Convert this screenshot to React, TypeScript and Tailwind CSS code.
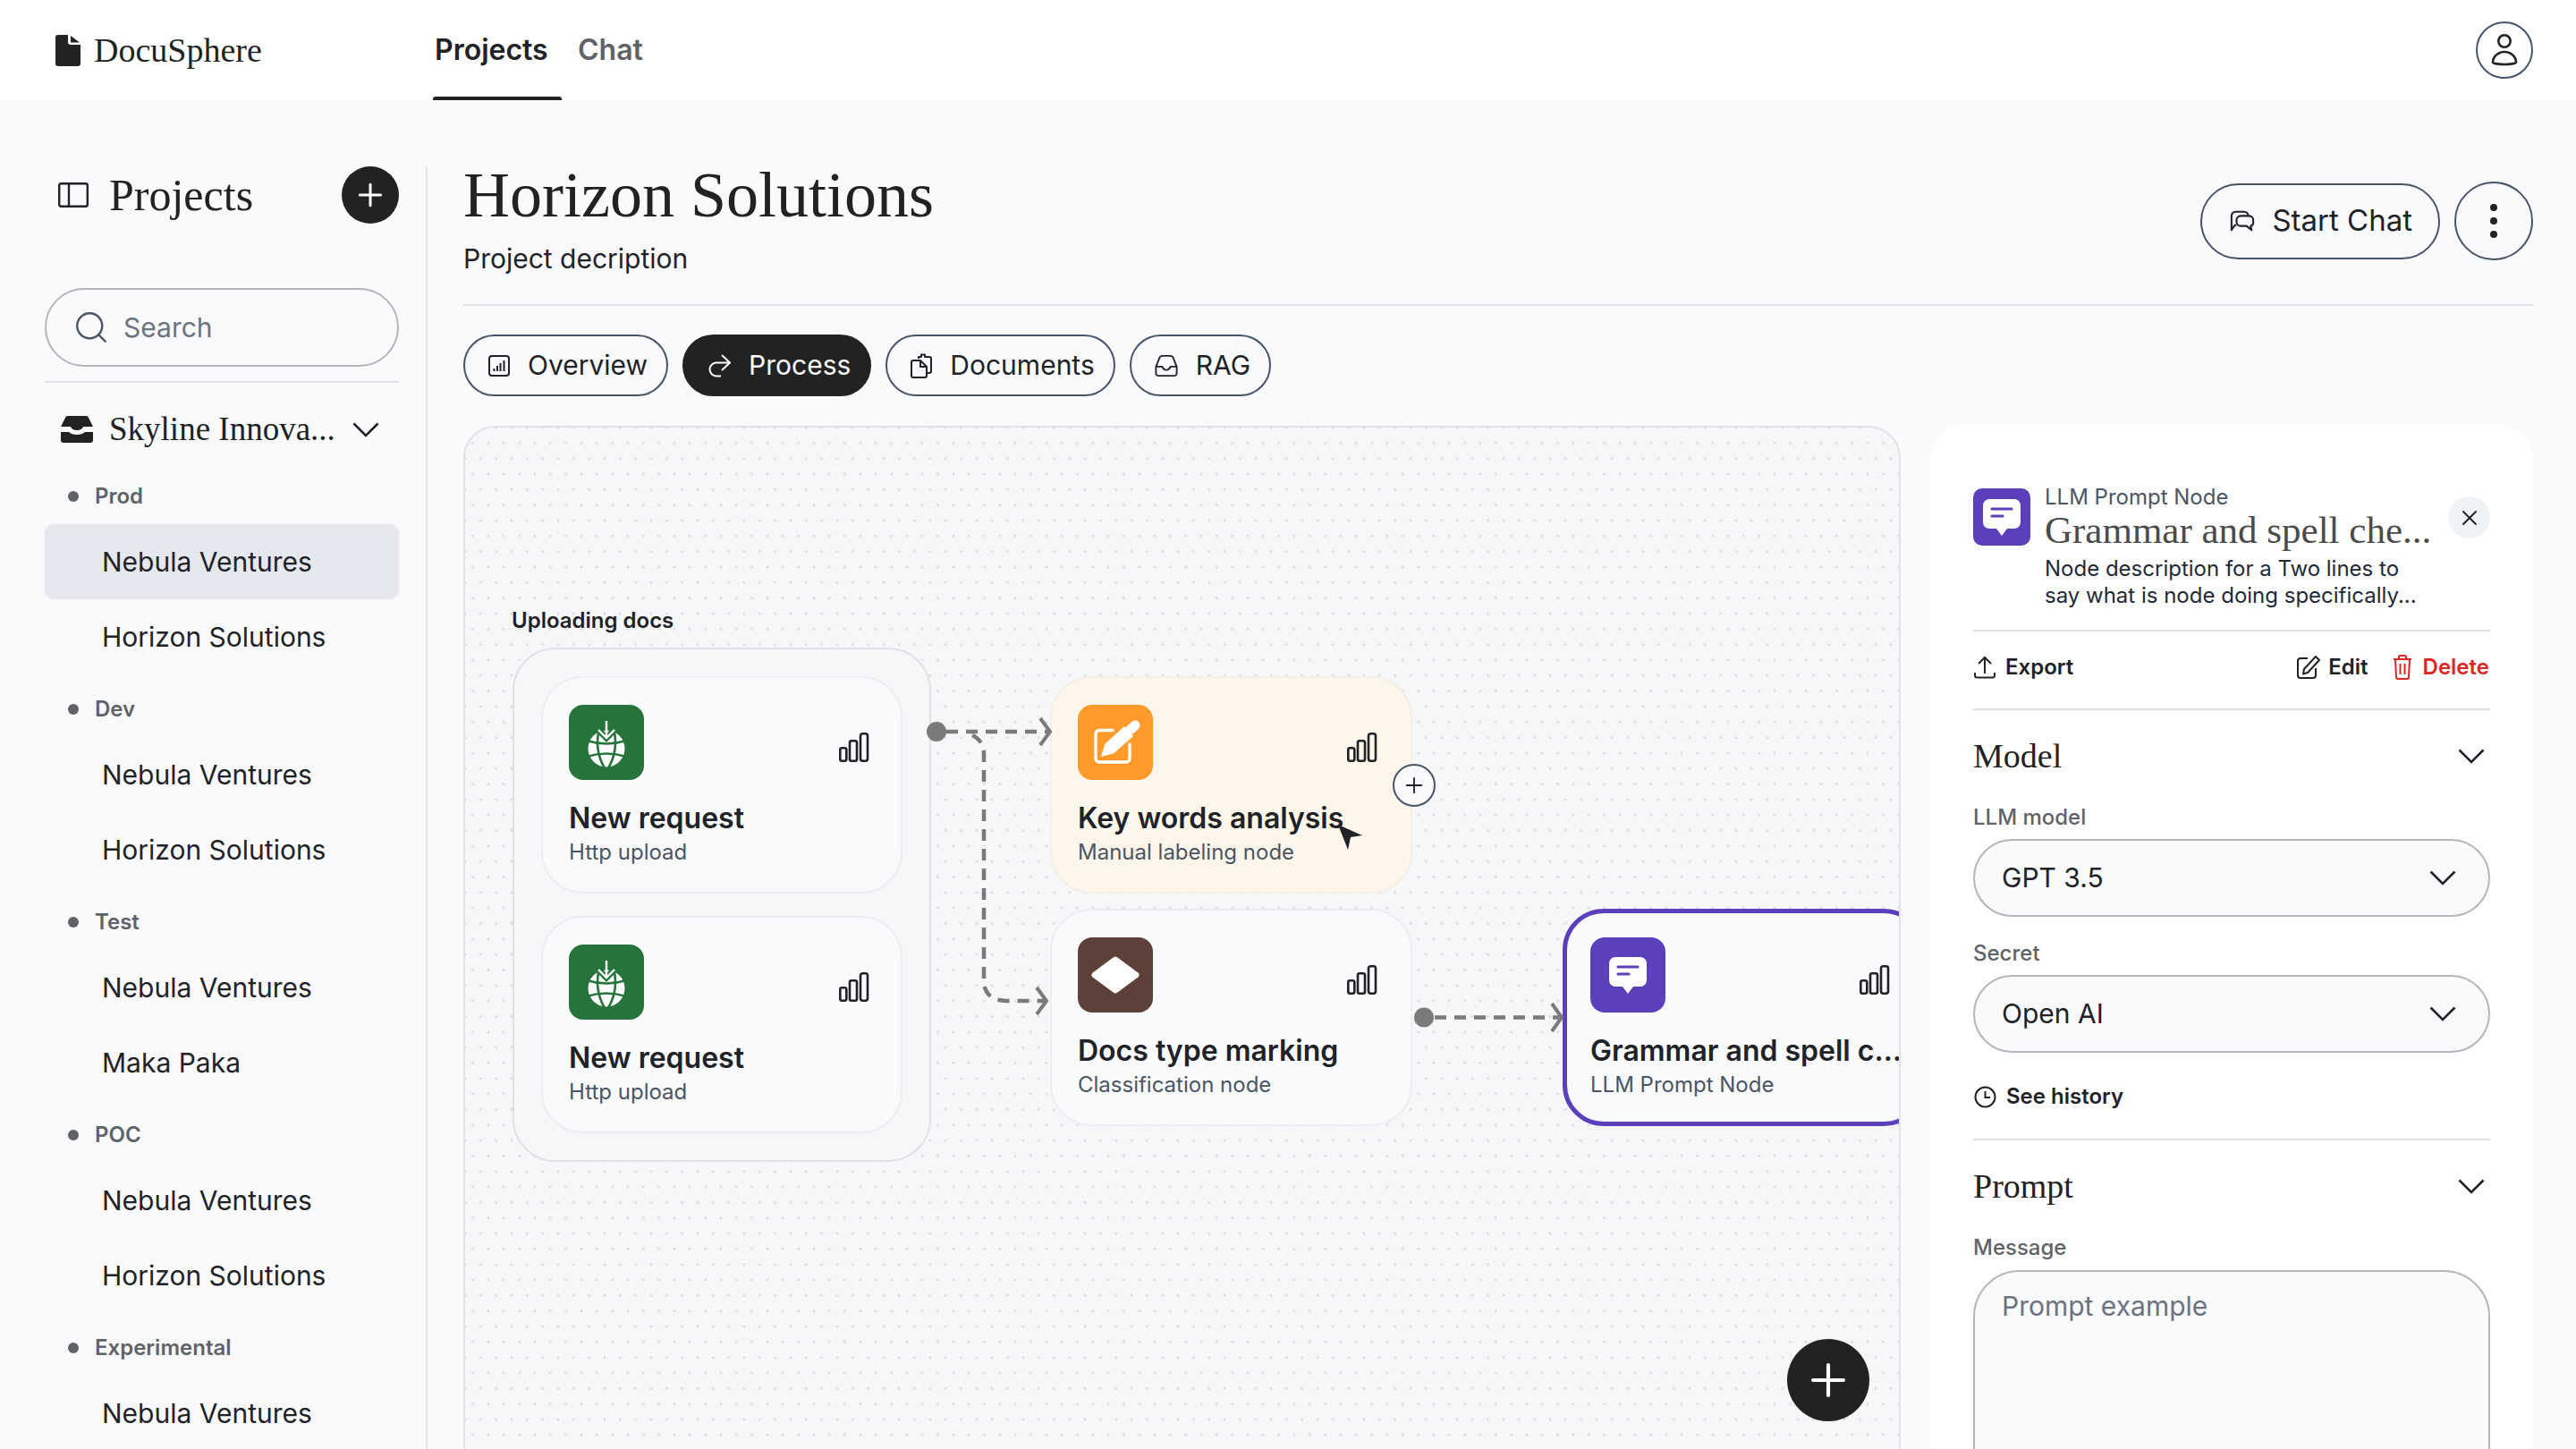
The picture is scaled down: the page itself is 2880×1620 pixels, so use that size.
import { Plus, Search, X } from 'lucide-react';

const SERIF = "[font-family:'Liberation_Serif',serif]";

const GROUPS = [
    { name: 'Prod', items: ['Nebula Ventures', 'Horizon Solutions'] },
    { name: 'Dev', items: ['Nebula Ventures', 'Horizon Solutions'] },
    { name: 'Test', items: ['Nebula Ventures', 'Maka Paka'] },
    { name: 'POC', items: ['Nebula Ventures', 'Horizon Solutions'] },
    { name: 'Experimental', items: ['Nebula Ventures'] },
];

function Chevron({ className }: { className?: string }) {
    return (
        <svg width="30" height="17" viewBox="0 0 30 17" fill="none" stroke="#1f2226" strokeWidth="2.6" className={className}>
            <path d="M1.500 1.500L15 15L28.500 1.500" />
        </svg>
    );
}

function Bars() {
    return (
        <svg width="34" height="33" viewBox="0 0 34 33" fill="none" stroke="#1f2226" strokeWidth="2.6">
            <rect x="1.3" y="17.3" width="7" height="14.4" rx="2" />
            <rect x="12" y="9.3" width="8" height="22.4" rx="2" />
            <rect x="24" y="1.3" width="8" height="30.4" rx="2.4" />
        </svg>
    );
}

function GlobeIcon() {
    return (
        <svg viewBox="0 0 84 84" className="w-full h-full" fill="none">
            <circle cx="42" cy="49" r="20.5" fill="#fff" />
            <g stroke="#26733c" strokeWidth="2.6">
                <path d="M34 27Q28 50 40 71" />
                <path d="M50 27Q56 50 44 71" />
                <path d="M20 40Q42 47 64 40" />
                <path d="M20 58Q42 51 64 58" />
            </g>
            <path d="M31 26L42 37L53 26" stroke="#26733c" strokeWidth="7" />
            <path d="M42 18V37M33 28L42 37L51 28" stroke="#fff" strokeWidth="2.4" />
        </svg>
    );
}

function PencilIcon() {
    return (
        <svg viewBox="0 0 84 84" className="w-full h-full" fill="none">
            <path d="M39 28.5H24a4 4 0 0 0-4 4V60a4 4 0 0 0 4 4H54a4 4 0 0 0 4-4V44" stroke="#fff" strokeWidth="3.4" strokeLinecap="round" />
            <path d="M27 57L31 44L52 25L61 35L40 53.5Z" fill="#fff" stroke="#fff" strokeWidth="1.5" strokeLinejoin="round" />
            <path d="M59 27.5L64 23" stroke="#fff" strokeWidth="11" strokeLinecap="round" />
        </svg>
    );
}

function DiamondIcon() {
    return (
        <svg viewBox="0 0 84 84" className="w-full h-full">
            <path d="M19 42L42 25L65 42L42 59Z" fill="#fff" stroke="#fff" strokeWidth="7" strokeLinejoin="round" />
        </svg>
    );
}

function BubbleIcon({ viewBox = '0 0 84 84' }: { viewBox?: string }) {
    return (
        <svg viewBox={viewBox} className="w-full h-full" fill="none">
            <path d="M28 22H56a7 7 0 0 1 7 7V48a7 7 0 0 1-7 7H48L42 63L36 55H28a7 7 0 0 1-7-7V29a7 7 0 0 1 7-7Z" fill="#fff" />
            <path d="M31 33H53M31 41H43" stroke="#5b3fbb" strokeWidth="3.2" strokeLinecap="round" />
        </svg>
    );
}

function Node({ icon, iconBg, title, sub, className }: { icon: React.ReactNode; iconBg: string; title: string; sub: string; className: string }) {
    return (
        <div className={`h-[243px] rounded-[46px] ${className}`}>
            <div className="flex justify-between items-start">
                <div className={`w-[84px] h-[84px] rounded-[16px] ${iconBg}`}>{icon}</div>
                <div className="mt-[31px]"><Bars /></div>
            </div>
            <div className="mt-[23px] text-[32px] leading-[40px] font-semibold text-[#1f2226] whitespace-nowrap">{title}</div>
            <div className="mt-[2px] text-[24px] leading-[32px] text-[#4b5563] whitespace-nowrap">{sub}</div>
        </div>
    );
}

function Select({ value }: { value: string }) {
    return (
        <div className="mt-[8px] h-[87px] rounded-full border-2 border-[#b4b6b9] bg-[#f9fafc] pl-[30px] pr-[36px] flex items-center justify-between text-[30px] text-[#1f2226]">
            {value}
            <Chevron />
        </div>
    );
}

function TabButton({ icon, label, active }: { icon: React.ReactNode; label: string; active?: boolean }) {
    const style = active ? 'bg-[#222222] text-white border-[#222222]' : 'border-[#475569] text-[#1f2226]';
    return (
        <div className={`h-[69px] rounded-full border-2 pl-[26px] pr-[21px] flex items-center gap-[20px] text-[30px] ${style}`}>
            {icon}
            {label}
        </div>
    );
}

export default function App() {
    return (
        <div className="w-[2880px] h-[1620px] overflow-hidden flex flex-col bg-[#f9fafc] font-['Inter',sans-serif] text-[#1f2226]">
            <header className="h-[112px] shrink-0 bg-white flex items-center pl-[62px] pr-[48px]">
                <div className="w-[422px] flex items-center gap-[15px]">
                    <svg width="28" height="35" viewBox="0 0 28 35" fill="#222222">
                        <path d="M3 0h11v8a3 3 0 0 0 3 3h11v21a3 3 0 0 1-3 3H3a3 3 0 0 1-3-3V3a3 3 0 0 1 3-3z" />
                        <path d="M17 1L27 8.5H18a1 1 0 0 1-1-1z" />
                    </svg>
                    <span className={`${SERIF} text-[38px] text-[#222222]`}>DocuSphere</span>
                </div>
                <nav className="flex h-full gap-[18px] text-[32px] font-semibold">
                    <div className="relative w-[144px] flex items-center pl-[2px]">
                        Projects
                        <div className="absolute bottom-0 left-0 right-0 h-[4px] rounded-t-[3px] bg-[#222222]" />
                    </div>
                    <div className="flex items-center text-[#5f6368]">Chat</div>
                </nav>
                <div className="ml-auto w-[64px] h-[64px] rounded-full border-2 border-[#475569] flex items-center justify-center">
                    <svg width="30" height="36" viewBox="0 0 30 36" fill="none" stroke="#1f2226" strokeWidth="2.6">
                        <circle cx="15" cy="8" r="6.7" />
                        <path d="M2 32C2 25 8 20 15 20C22 20 28 25 28 32C28 33 20 34 15 34C10 34 2 33 2 32Z" />
                    </svg>
                </div>
            </header>

            <div className="flex-1 flex min-h-0">
                <aside className="w-[478px] shrink-0 mt-[74px] pl-[50px] pr-[30px] border-r-2 border-[#e2e4e8]">
                    <div className="h-[64px] flex items-center">
                        <svg width="34" height="28" viewBox="0 0 34 28" fill="none" stroke="#1f2226" strokeWidth="2.4" className="ml-[15px]">
                            <rect x="1.2" y="1.2" width="31.6" height="25.6" rx="2" />
                            <path d="M12 1.2V26.8" />
                        </svg>
                        <span className={`${SERIF} ml-[23px] text-[50px] text-[#222222]`}>Projects</span>
                        <div className="ml-auto w-[64px] h-[64px] rounded-full bg-[#222222] flex items-center justify-center text-white">
                            <Plus size={40} strokeWidth={1.8} />
                        </div>
                    </div>
                    <div className="mt-[72px] h-[88px] rounded-full border-2 border-[#b4b6b9] pl-[29px] flex items-center gap-[15px] text-[30px] text-[#6b7280]">
                        <Search size={42} strokeWidth={1.4} className="text-[#4b5563]" />
                        Search
                    </div>
                    <div className="mt-[16px] h-[2px] bg-[#dfe1e5]" />
                    <div className="mt-[20px] h-[64px] flex items-center">
                        <svg width="36" height="30" viewBox="0 0 36 30" fill="#222222" className="ml-[18px]">
                            <path d="M8 0H28a3 3 0 0 1 3 2L36 12H25Q23.500 16 18 16Q12.500 16 11 12H0L5 2a3 3 0 0 1 3-2Z" />
                            <path d="M0 18H9Q12 21 18 21Q24 21 27 18H36V27a3 3 0 0 1-3 3H3a3 3 0 0 1-3-3Z" />
                        </svg>
                        <span className={`${SERIF} ml-[18px] text-[37px] whitespace-nowrap text-[#222222]`}>Skyline Innova...</span>
                        <Chevron className="ml-auto mr-[22px]" />
                    </div>
                    <div className="mt-[12px]">
                        {GROUPS.map((group) => (
                            <div key={group.name} className="mb-[8px]">
                                <div className="h-[62px] flex items-center pl-[26px] gap-[18px] text-[24px] font-semibold text-[#5f6368]">
                                    <div className="w-[12px] h-[12px] rounded-full bg-[#5f6368]" />
                                    {group.name}
                                </div>
                                {group.items.map((item, i) => (
                                    <div
                                        key={item}
                                        className={`h-[84px] flex items-center pl-[64px] text-[30px] rounded-[10px] ${group.name === 'Prod' && i === 0 ? 'bg-[#e5e8ef]' : ''}`}
                                    >
                                        {item}
                                    </div>
                                ))}
                            </div>
                        ))}
                    </div>
                </aside>

                <main className="flex-1 min-w-0 pl-[40px] pr-[48px] flex flex-col">
                    <div className="pt-[74px] pb-[31px] border-b-2 border-[#e2e4e8] flex justify-between items-start">
                        <div>
                            <h1 className={`${SERIF} text-[72px] leading-[64px] text-[#222222]`}>Horizon Solutions</h1>
                            <p className="mt-[19px] text-[30px] leading-[40px]">Project decription</p>
                        </div>
                        <div className="mt-[17px] flex items-center gap-[16px]">
                            <div className="h-[85px] rounded-full border-2 border-[#475569] pl-[31px] pr-[29px] flex items-center gap-[19px] text-[33px]">
                                <svg width="28" height="26" viewBox="0 0 30 26" fill="none" stroke="#1f2226" strokeWidth="2.2" strokeLinejoin="round">
                                    <path d="M8 18H6L2 24V7a5 5 0 0 1 5-5H17a5 5 0 0 1 5 5" />
                                    <path d="M13 7H23a5 5 0 0 1 5 5V15a4 4 0 0 1-3 4L26 24L20 19H13a5 5 0 0 1-5-5V12a5 5 0 0 1 5-5Z" />
                                </svg>
                                Start Chat
                            </div>
                            <div className="w-[88px] h-[88px] rounded-full border-2 border-[#475569] flex flex-col items-center justify-center gap-[7px]">
                                <div className="w-[8px] h-[8px] rounded-full bg-[#1f2226]" />
                                <div className="w-[8px] h-[8px] rounded-full bg-[#1f2226]" />
                                <div className="w-[8px] h-[8px] rounded-full bg-[#1f2226]" />
                            </div>
                        </div>
                    </div>

                    <div className="mt-[32px] flex gap-[16px]">
                        <TabButton
                            label="Overview"
                            icon={
                                <svg width="24" height="24" viewBox="0 0 24 24" fill="none" stroke="currentColor" strokeWidth="2">
                                    <rect x="1" y="1" width="22" height="22" rx="3" />
                                    <path d="M6.500 18V15M10 18V12M13.500 18V9M17.500 18V6" />
                                </svg>
                            }
                        />
                        <TabButton
                            active
                            label="Process"
                            icon={
                                <svg width="26" height="26" viewBox="0 0 26 26" fill="none" stroke="currentColor" strokeWidth="2">
                                    <path d="M16 1L25 9.500L16 18" />
                                    <path d="M25 9.500H10a7.500 7.500 0 0 0 0 15H15" />
                                </svg>
                            }
                        />
                        <TabButton
                            label="Documents"
                            icon={
                                <svg width="24" height="28" viewBox="0 0 24 28" fill="none" stroke="currentColor" strokeWidth="2" strokeLinejoin="round">
                                    <path d="M9 6V4H12V1.500H16V4H21a2 2 0 0 1 2 2V20a2 2 0 0 1-2 2H18" />
                                    <path d="M3 8H11L18 15V25a2 2 0 0 1-2 2H3a2 2 0 0 1-2-2V10a2 2 0 0 1 2-2Z" />
                                    <path d="M11 8V15H18" />
                                </svg>
                            }
                        />
                        <TabButton
                            label="RAG"
                            icon={
                                <svg width="26" height="26" viewBox="0 0 28 26" fill="none" stroke="currentColor" strokeWidth="2" strokeLinejoin="round">
                                    <path d="M1.500 14L6 3a3 3 0 0 1 2.500-2H19.500a3 3 0 0 1 2.500 2L26.500 14V22a3 3 0 0 1-3 3H4.500a3 3 0 0 1-3-3Z" />
                                    <path d="M1.500 14H9Q10.500 18 14 18Q17.500 18 19 14H26.500" />
                                </svg>
                            }
                        />
                    </div>

                    <div className="mt-[33px] flex-1 flex gap-[32px] min-h-0">
                        <div className="relative w-[1607px] shrink-0 h-[1180px] rounded-[36px] border-2 border-[#e0e2e6] overflow-hidden bg-[#f6f7f9] bg-[radial-gradient(circle,#dcdee3_1.4px,transparent_1.7px),radial-gradient(circle,#dcdee3_1.4px,transparent_1.7px)] [background-size:17.33px_34.66px] [background-position:0_0,8.67px_17.33px]">
                            <div className="absolute left-[52px] top-[201px] text-[24px] leading-[30px] font-semibold whitespace-nowrap">Uploading docs</div>
                            <div className="absolute left-[53px] top-[246px] w-[468px] rounded-[48px] border-2 border-[#dfe1e5] bg-[#f6f7f9] p-[30px] flex flex-col gap-[25px]">
                                <Node
                                    icon={<GlobeIcon />}
                                    iconBg="bg-[#26733c]"
                                    title="New request"
                                    sub="Http upload"
                                    className="border-2 border-[#edeef1] bg-[#f9fafc] pt-[30px] pl-[29px] pr-[35px]"
                                />
                                <Node
                                    icon={<GlobeIcon />}
                                    iconBg="bg-[#26733c]"
                                    title="New request"
                                    sub="Http upload"
                                    className="border-2 border-[#edeef1] bg-[#f9fafc] pt-[30px] pl-[29px] pr-[35px]"
                                />
                            </div>

                            <div className="absolute left-[654px] top-[278px] w-[405px]">
                                <Node
                                    icon={<PencilIcon />}
                                    iconBg="bg-[#ff9a2b]"
                                    title="Key words analysis"
                                    sub="Manual labeling node"
                                    className="border-2 border-[#f5efe6] bg-[#fff6eb] pt-[30px] pl-[29px] pr-[37px]"
                                />
                            </div>
                            <div className="absolute left-[654px] top-[538px] w-[405px]">
                                <Node
                                    icon={<DiamondIcon />}
                                    iconBg="bg-[#5d4037]"
                                    title="Docs type marking"
                                    sub="Classification node"
                                    className="border-2 border-[#edeef1] bg-[#f9fafc] pt-[30px] pl-[29px] pr-[37px]"
                                />
                            </div>
                            <div className="absolute left-[1227px] top-[538px] w-[405px]">
                                <Node
                                    icon={<BubbleIcon />}
                                    iconBg="bg-[#5b3fbb]"
                                    title="Grammar and spell c…"
                                    sub="LLM Prompt Node"
                                    className="border-[5px] border-[#5b3fbb] bg-[#f9fafc] pt-[27px] pl-[26px] pr-[34px]"
                                />
                            </div>

                            <svg width="1607" height="1180" className="absolute left-0 top-0" fill="none" stroke="#7a7a7a">
                                <g strokeWidth="4.5" strokeDasharray="13 9">
                                    <path d="M538 340H653" />
                                    <path d="M567 344Q580 350 580 366V618Q580 640 605 641H648" />
                                    <path d="M1084 659.500H1223" />
                                </g>
                                <g strokeWidth="4">
                                    <path d="M643 325L654 340L643 355" />
                                    <path d="M639 626L650 641L639 656" />
                                    <path d="M1215 644L1226 659.500L1215 675" />
                                </g>
                                <g fill="#7a7a7a" stroke="none">
                                    <circle cx="527" cy="340" r="11" />
                                    <circle cx="1072" cy="659.500" r="11" />
                                </g>
                            </svg>

                            <div className="absolute left-[1037px] top-[376px] w-[48px] h-[48px] rounded-full border-2 border-[#475569] bg-[#f9fafc] flex items-center justify-center">
                                <Plus size={28} strokeWidth={1.6} />
                            </div>
                            <svg width="28" height="29" viewBox="0 0 28 29" className="absolute left-[976px] top-[444px]" fill="#1f2226">
                                <path d="M0 0L27 12L14 14L11 28Z" />
                            </svg>
                            <div className="absolute left-[1478px] top-[1019px] w-[92px] h-[92px] rounded-full bg-[#222222] flex items-center justify-center text-white">
                                <Plus size={58} strokeWidth={1.7} />
                            </div>
                        </div>

                        <section className="flex-1 min-w-0 -mt-[2px] h-[1180px] rounded-t-[40px] bg-white pt-[72px] pl-[49px] pr-[48px] overflow-hidden">
                            <div className="flex">
                                <div className="w-[64px] h-[64px] shrink-0 rounded-[10px] bg-[#5b3fbb]">
                                    <BubbleIcon viewBox="10 10 64 64" />
                                </div>
                                <div className="ml-[16px] flex-1 min-w-0 -mt-[5px]">
                                    <div className="text-[24px] leading-[30px] text-[#4b5563]">LLM Prompt Node</div>
                                    <div className={`${SERIF} text-[43px] leading-[44px] text-[#4b4b4b] whitespace-nowrap`}>Grammar and spell che...</div>
                                </div>
                                <div className="w-[47px] h-[47px] shrink-0 mt-[9px] rounded-full bg-[#eff2f6] flex items-center justify-center">
                                    <X size={28} strokeWidth={1.6} />
                                </div>
                            </div>
                            <div className="ml-[80px] mt-[6px] text-[24px] leading-[30px] text-[#1f2937]">
                                Node description for a Two lines to
                                <br />
                                say what is node doing specifically...
                            </div>
                            <div className="mt-[23px] h-[2px] bg-[#dfe1e5]" />
                            <div className="mt-[20px] h-[40px] flex items-center text-[24px] font-semibold">
                                <svg width="26" height="26" viewBox="0 0 26 26" fill="none" stroke="#1f2226" strokeWidth="2" className="mr-[10px]">
                                    <path d="M13 20V2M6 9L13 2L20 9" />
                                    <path d="M2 19V22a2.500 2.500 0 0 0 2.500 2.500H21.500a2.500 2.500 0 0 0 2.500-2.500V19" />
                                </svg>
                                Export
                                <svg width="26" height="28" viewBox="0 0 26 28" fill="none" stroke="#1f2226" strokeWidth="2" strokeLinejoin="round" className="ml-auto mr-[9px]">
                                    <path d="M12 4H4a3 3 0 0 0-3 3V23a3 3 0 0 0 3 3H18a3 3 0 0 0 3-3V15" />
                                    <path d="M21 2L25 6L12 20L7 21.500L8 16Z" />
                                </svg>
                                Edit
                                <svg width="22" height="28" viewBox="0 0 22 28" fill="none" stroke="#dc2626" strokeWidth="2" strokeLinejoin="round" className="ml-[27px] mr-[12px]">
                                    <path d="M1 5H21M7 5V2.500A1.500 1.500 0 0 1 8.500 1H13.500A1.500 1.500 0 0 1 15 2.500V5" />
                                    <path d="M3 5L4 25a2 2 0 0 0 2 2H16a2 2 0 0 0 2-2L19 5" />
                                    <path d="M8.500 10V22M13.500 10V22" />
                                </svg>
                                <span className="text-[#dc2626] mr-[1px]">Delete</span>
                            </div>
                            <div className="mt-[26px] h-[2px] bg-[#dfe1e5]" />

                            <div className={`${SERIF} mt-[27px] h-[48px] flex items-center justify-between text-[38px] text-[#222222]`}>
                                Model
                                <Chevron className="mr-[6px]" />
                            </div>
                            <div className="mt-[29px] text-[24px] leading-[32px] font-medium text-[#5f6368]">LLM model</div>
                            <Select value="GPT 3.5" />
                            <div className="mt-[25px] text-[24px] leading-[32px] font-medium text-[#5f6368]">Secret</div>
                            <Select value="Open AI" />
                            <div className="mt-[29px] h-[40px] flex items-center gap-[11px] text-[24px] font-semibold">
                                <svg width="25" height="25" viewBox="0 0 25 25" fill="none" stroke="#1f2226" strokeWidth="2" className="ml-[1px]">
                                    <circle cx="12.500" cy="12.500" r="11" />
                                    <path d="M12.500 6V13H18" />
                                </svg>
                                See history
                            </div>
                            <div className="mt-[27px] h-[2px] bg-[#dfe1e5]" />
                            <div className={`${SERIF} mt-[27px] h-[48px] flex items-center justify-between text-[38px] text-[#222222]`}>
                                Prompt
                                <Chevron className="mr-[6px]" />
                            </div>
                            <div className="mt-[29px] text-[24px] leading-[32px] font-medium text-[#5f6368]">Message</div>
                            <div className="mt-[9px] h-[300px] rounded-[52px] border-2 border-[#b4b6b9] bg-[#f9fafc] pl-[30px] pt-[18px] text-[30px] leading-[40px] text-[#6b7280]">
                                Prompt example
                            </div>
                        </section>
                    </div>
                </main>
            </div>
        </div>
    );
}
